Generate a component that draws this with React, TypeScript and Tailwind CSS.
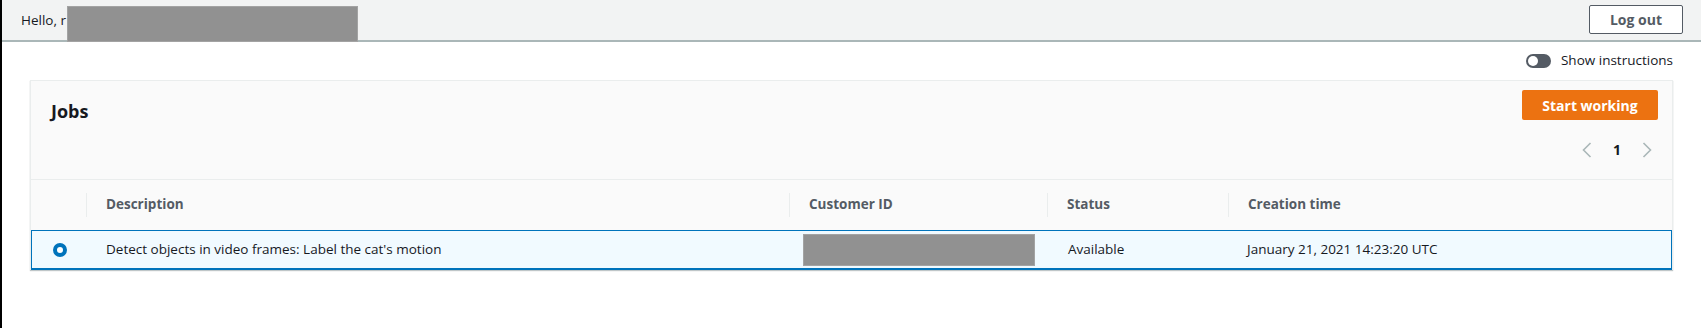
import React from "react";

const font = { fontFamily: '"Open Sans", "Liberation Sans", sans-serif' };

function Chevron({ dir }: { dir: "left" | "right" }) {
  return (
    <svg width="10" height="16" viewBox="0 0 10 16" fill="none">
      <polyline
        points={dir === "left" ? "8.5,1 1.5,8 8.5,15" : "1.5,1 8.5,8 1.5,15"}
        stroke="#aab7b8"
        strokeWidth="1.6"
      />
    </svg>
  );
}

function HeadCell({ title, sep = true }: { title: string; sep?: boolean }) {
  return (
    <div className="flex items-center h-full">
      {sep && <div className="w-px h-6 bg-[#eaeded]" />}
      <span className="pl-[19px] text-[13.5px] font-bold text-[#545b64] -mt-[1px]">{title}</span>
    </div>
  );
}

export default function App() {
  return (
    <div className="w-full h-[328px] bg-white border-l-2 border-black text-[#16191f]" style={font}>
      {/* top bar */}
      <div className="relative h-[42px] bg-[#f2f3f3] border-b-2 border-[#aab7b8] flex items-center justify-between pl-[19px] pr-[18px]">
        <span className="text-[13.5px] text-[#16191f]">Hello, r</span>
        <div className="absolute left-[65px] top-[6px] w-[291px] h-[36px] bg-[#919191] border border-[#a3a3a3]" />
        <button className="h-[29px] w-[94px] border border-[#545b64] rounded-[2px] bg-white text-[14px] font-bold text-[#545b64] -mt-[2px]">
          Log out
        </button>
      </div>

      <div className="px-[28px]">
        {/* toggle row */}
        <div className="flex items-center justify-end gap-[10px] h-[23px] mt-[7px]">
          <div className="w-[25px] h-[14px] rounded-full bg-[#545b64] flex items-center pl-[2px]">
            <div className="w-[10px] h-[10px] rounded-full bg-white" />
          </div>
          <span className="text-[13.5px] text-[#16191f]">Show instructions</span>
        </div>

        {/* card */}
        <div className="mt-[8px] border border-[#eaeded] border-b-0 shadow-[0_1px_1px_0_rgba(0,28,36,0.25)]">
          <div className="h-[99px] bg-[#fafafa] border-b border-[#eaeded] flex justify-between">
            <h2 className="pl-[20px] pt-[16px] text-[18px] font-bold leading-[28px] text-[#16191f]">Jobs</h2>
            <div className="flex flex-col items-end pt-[9px] pr-[14px]">
              <button className="h-[30px] w-[136px] rounded-[2px] bg-[#ec7211] text-white text-[14px] font-bold">
                Start working
              </button>
              <div className="flex items-center gap-[21px] mt-[19px] mr-[6px]">
                <Chevron dir="left" />
                <span className="text-[14px] font-bold text-[#16191f]">1</span>
                <Chevron dir="right" />
              </div>
            </div>
          </div>

          <div className="grid grid-cols-[55px_703px_258px_181px_1fr] h-[50px] bg-[#fafafa]">
            <div />
            <HeadCell title="Description" />
            <HeadCell title="Customer ID" />
            <HeadCell title="Status" />
            <HeadCell title="Creation time" />
          </div>

          <div className="grid grid-cols-[55px_703px_258px_181px_1fr] h-[40px] bg-[#f1faff] border border-b-2 border-[#0073bb] items-center text-[13.5px] text-[#16191f]">
            <div className="flex justify-center pl-[1px]">
              <div className="w-[14px] h-[14px] rounded-full border-[4.5px] border-[#0073bb] bg-white" />
            </div>
            <span className="pl-[19px]">Detect objects in video frames: Label the cat's motion</span>
            <div className="pl-[13px] pt-[1px]">
              <div className="w-[232px] h-[32px] bg-[#919191] border border-[#a3a3a3]" />
            </div>
            <span className="pl-[20px]">Available</span>
            <span className="pl-[18px]">January 21, 2021 14:23:20 UTC</span>
          </div>
        </div>
      </div>
    </div>
  );
}
